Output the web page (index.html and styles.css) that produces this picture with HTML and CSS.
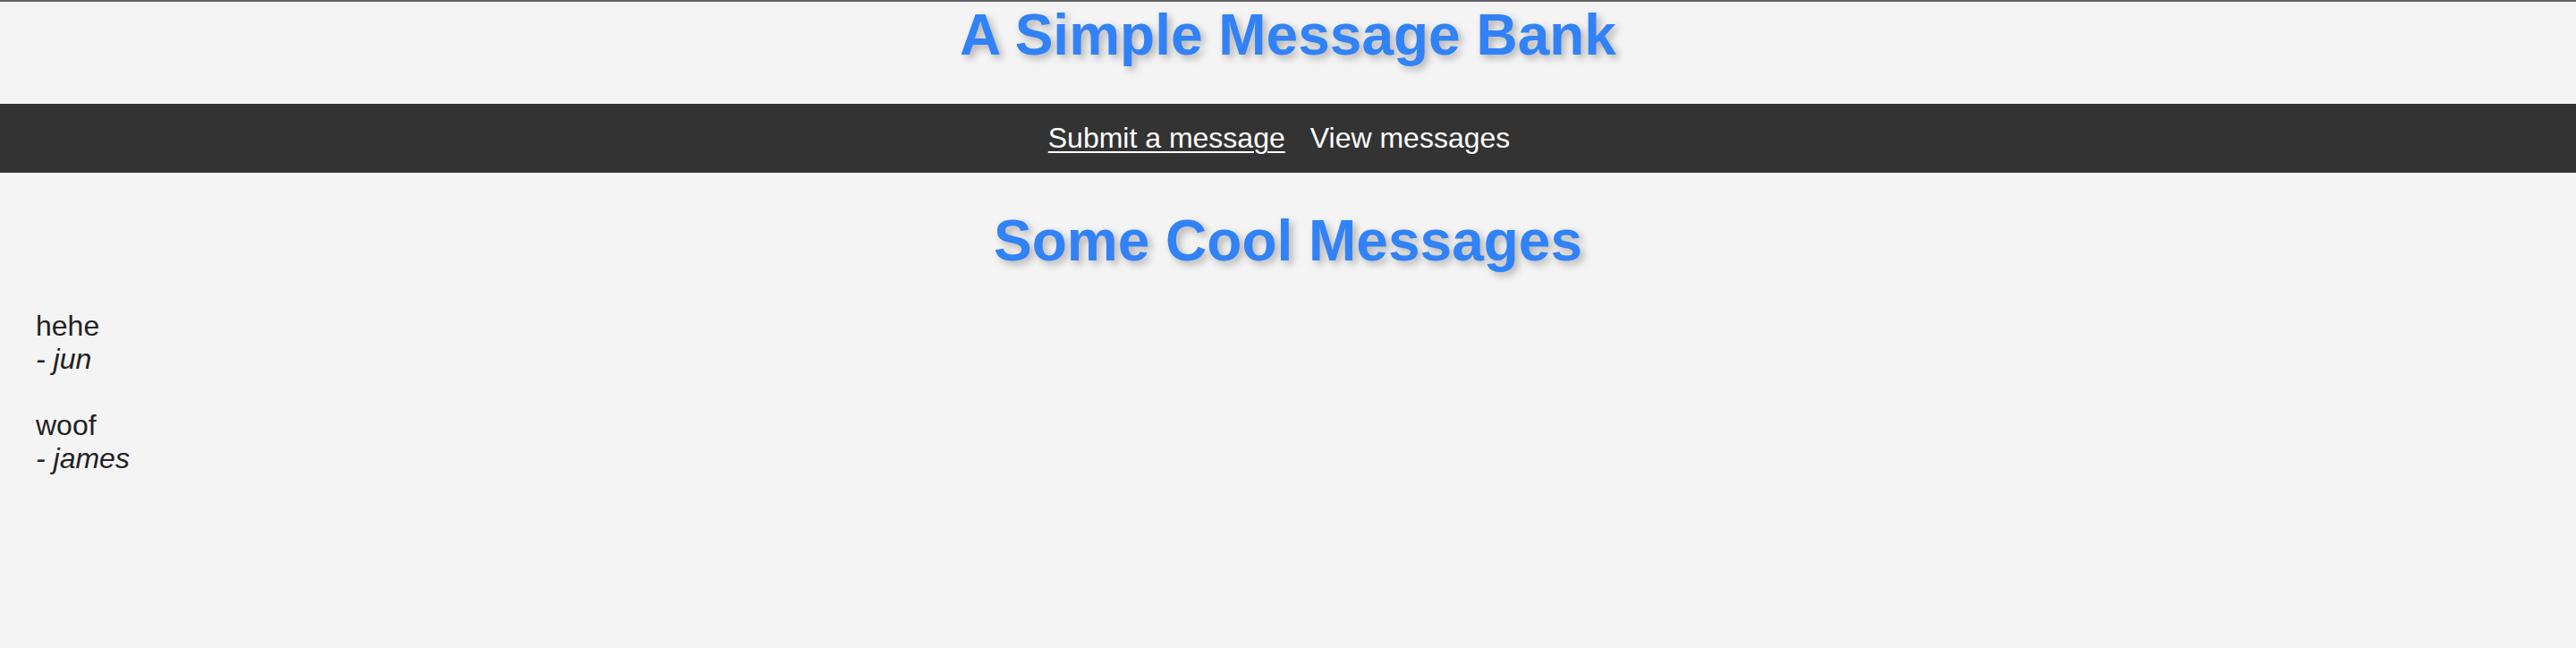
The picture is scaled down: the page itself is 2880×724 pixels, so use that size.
FILE: index.html
```html
<!DOCTYPE html>
<html>
<head>
<meta charset="utf-8">
<title>A Simple Message Bank</title>
<link rel="stylesheet" href="styles.css">
</head>
<body>
<header class="top">
  <h1 class="title">A Simple Message Bank</h1>
</header>
<nav class="nav">
  <a class="nav-link is-active" href="#">Submit a message</a>
  <a class="nav-link" href="#">View messages</a>
</nav>
<main class="content">
  <h1 class="title section-title">Some Cool Messages</h1>
  <div class="messages">
    <p class="message">hehe<br><em class="author">- jun</em></p>
    <p class="message">woof<br><em class="author">- james</em></p>
  </div>
</main>
</body>
</html>
```

FILE: styles.css
```css
html, body {
  margin: 0;
  padding: 0;
}
body {
  background: #f4f4f4;
  font-family: "Liberation Sans", Arial, sans-serif;
  color: #222222;
  border-top: 2px solid #626166;
  min-height: 722px;
}
.top {
  display: flex;
  justify-content: center;
  padding-bottom: 40px;
}
.title {
  margin: 0;
  font-size: 64px;
  font-weight: bold;
  line-height: 74px;
  color: #3182f6;
  text-shadow: 4px 4px 8px rgba(0, 0, 0, 0.28);
  text-align: center;
}
.nav {
  background: #333333;
  display: flex;
  justify-content: center;
  gap: 28px;
  padding: 20px 20px 20px 0;
}
.nav-link {
  font-size: 32px;
  line-height: 37px;
  color: #ffffff;
  text-decoration: none;
}
.nav-link.is-active {
  text-decoration: underline;
  text-decoration-thickness: 2px;
  text-underline-offset: 4px;
}
.content {
  padding: 39px 40px 0 40px;
}
.section-title {
  margin-bottom: 40px;
}
.messages {
  display: flex;
  flex-direction: column;
  gap: 37px;
}
.message {
  margin: 0;
  font-size: 32px;
  line-height: 37px;
  color: #222222;
}
.author {
  font-style: italic;
}
```
